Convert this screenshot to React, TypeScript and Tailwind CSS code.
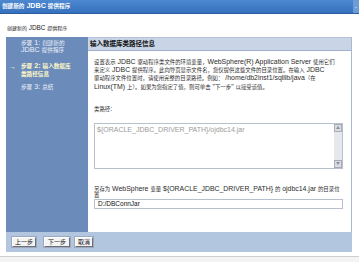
import React from "react";

function M({ s }: { s: string }) {
  const parts = s.split(/([\u0000-\u007F]+)/).filter((p) => p.length > 0);
  return (
    <>
      {parts.map((p, i) =>
        /^[\u0000-\u007F]+$/.test(p) ? (
          <span key={i} className="text-[1.28em]">
            {p}
          </span>
        ) : (
          <React.Fragment key={i}>{p}</React.Fragment>
        )
      )}
    </>
  );
}

function Btn({ w, children }: { w: string; children: React.ReactNode }) {
  return (
    <div
      className={`${w} h-[10px] bg-[#f4f4f4] border border-t-[#ffffff] border-l-[#ffffff] border-r-[#6f6f6f] border-b-[#6f6f6f] outline outline-1 outline-[#9aa9bf] flex items-center justify-center text-[6px] leading-none text-[#111] whitespace-nowrap`}
    >
      {children}
    </div>
  );
}

function ScrollArrow({ up }: { up: boolean }) {
  return (
    <div className="w-[8px] h-[8px] bg-[#d9dde3] border border-[#a7adb6] flex items-center justify-center">
      <svg width="4" height="3" viewBox="0 0 4 3">
        {up ? <path d="M0 3 L2 0 L4 3 Z" fill="#8a9099" /> : <path d="M0 0 L2 3 L4 0 Z" fill="#8a9099" />}
      </svg>
    </div>
  );
}

export default function App() {
  return (
    <div className="w-[359px] h-[262px] bg-white overflow-hidden flex flex-col font-['Liberation_Sans','Noto_Sans_CJK_SC',sans-serif]">
      {/* title bar */}
      <div className="h-[14px] shrink-0 bg-gradient-to-b from-[#4d89d1] to-[#3571bd] border-b border-[#2b5c9c] flex items-center justify-between pl-[2px]">
        <span className="text-white font-bold text-[5.6px] leading-none whitespace-nowrap">
          <M s="创建新的 JDBC 提供程序" />
        </span>
        <span className="w-[6px] h-[13px] bg-[#6f9bd6] text-white text-[6px] leading-none flex items-center justify-center">-</span>
      </div>

      {/* subtitle */}
      <div className="h-[23px] shrink-0 pt-[11px] pl-[7px] text-[5px] leading-[6px] text-[#222] whitespace-nowrap">
        <M s="创建新的 JDBC 提供程序" />
      </div>

      {/* main box */}
      <div className="ml-[6px] w-[346px] flex flex-col shrink-0">
        <div className="h-[195px] flex">
          {/* sidebar */}
          <div className="w-[82px] shrink-0 bg-[#6b8bbb] text-[5.6px] leading-[7.5px] text-[#eef2f8] pt-[2.5px] whitespace-nowrap overflow-hidden">
            <div className="pl-[15px]">
              <div>
                <M s="步骤 1: 创建新的" />
              </div>
              <div>
                <M s="JDBC 提供程序" />
              </div>
            </div>
            <div className="mt-[8.5px] flex font-bold text-[#fff9c8]">
              <span className="w-[15px] pl-[3px] text-[7px]">→</span>
              <div>
                <div>
                  <M s="步骤 2: 输入数据库" />
                </div>
                <div>类路径信息</div>
              </div>
            </div>
            <div className="mt-[6.3px] pl-[15px]">
              <M s="步骤 3: 总结" />
            </div>
          </div>

          {/* content */}
          <div className="w-[264px] shrink-0 overflow-hidden flex flex-col border-r border-[#a9b9d2] bg-white">
            <div className="h-[14px] shrink-0 bg-[#c9d5e7] border-t border-t-[#b3c3db] border-b border-b-[#9fb2cf] flex items-center pl-[2px] text-[6.5px] font-bold text-[#111] whitespace-nowrap">
              输入数据库类路径信息
            </div>
            <div className="pl-[6px] pr-[8px] pt-[7px] text-[5.4px] leading-[7.2px] text-[#2a2a2a]">
              <div className="whitespace-nowrap">
                <M s="设置表示 JDBC 驱动程序类文件的环境变量，WebSphere(R) Application Server 使用它们" />
              </div>
              <div className="whitespace-nowrap">
                <M s="来定义 JDBC 提供程序。此向导页显示文件名，您仅提供这些文件的目录位置。在输入 JDBC" />
              </div>
              <div className="whitespace-nowrap">
                <M s="驱动程序文件位置时，请使用完整的目录路径。例如： /home/db2inst1/sqllib/java（在" />
              </div>
              <div className="whitespace-nowrap">
                <M s={'Linux(TM) 上）。如果为您指定了值，则可单击 "下一步" 以接受该值。'} />
              </div>

              <div className="mt-[14.5px] whitespace-nowrap">
                <M s="类路径:" />
              </div>

              <div className="mt-[9px] h-[46px] border border-[#b7c1ce] flex">
                <div className="flex-1 pl-[2px] pt-[2px] text-[7px] leading-[7px] text-[#9a9a9a] whitespace-nowrap">
                  {"${ORACLE_JDBC_DRIVER_PATH}/ojdbc14.jar"}
                </div>
                <div className="w-[8px] bg-[#e6e8eb] flex flex-col justify-between">
                  <ScrollArrow up />
                  <ScrollArrow up={false} />
                </div>
              </div>

              <div className="mt-[17px] leading-[6.5px]">
                <div className="whitespace-nowrap">
                  <M s="另存为 WebSphere 变量 ${ORACLE_JDBC_DRIVER_PATH} 的 ojdbc14.jar 的目录位" />
                </div>
                <div>置</div>
              </div>
              <div className="mt-[0.5px] h-[10px] border border-[#b7c1ce] flex items-center pl-[3px] text-[6.5px] text-[#111] whitespace-nowrap">
                D:/DBConnJar
              </div>
            </div>
          </div>
        </div>

        {/* bottom bar */}
        <div className="h-[20px] bg-[#b3c6e0] flex items-center pl-[6px]">
          <Btn w="w-[24px]">上一步</Btn>
          <div className="w-[8px]" />
          <Btn w="w-[26px]">下一步</Btn>
          <div className="w-[5px]" />
          <Btn w="w-[18px]">取消</Btn>
        </div>
      </div>

      <div className="mt-[4px] h-[1px] shrink-0 bg-[#cfcfcf]" />
      <div className="flex-1 bg-[#f3f3f3]" />
    </div>
  );
}
